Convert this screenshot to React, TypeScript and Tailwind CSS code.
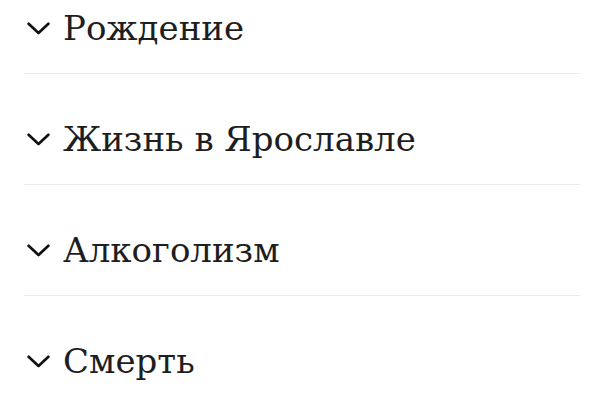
import { useState } from "react";

type Section = {
  id: string;
  title: string;
};

const sections: Section[] = [
  { id: "birth", title: "Рождение" },
  { id: "yaroslavl", title: "Жизнь в Ярославле" },
  { id: "alcohol", title: "Алкоголизм" },
  { id: "death", title: "Смерть" },
];

function Chevron({ open }: { open: boolean }) {
  return (
    <svg
      width={23}
      height={13}
      viewBox="0 0 23 13"
      className={open ? "block rotate-180" : "block"}
      fill="none"
      stroke="#111"
      strokeWidth={2.7}
      strokeLinecap="round"
      strokeLinejoin="round"
    >
      <polyline points="1.6,1.8 11.5,11 21.4,1.8" />
    </svg>
  );
}

export default function App() {
  const [open, setOpen] = useState<string | null>(null);

  return (
    <div className="min-h-screen overflow-hidden bg-white px-6">
      {/* list is scrolled a little past its top */}
      <div className="-mt-[37px]">
        {sections.map((s) => {
          const isOpen = open === s.id;
          return (
            <div key={s.id} className="border-b border-[#ebebeb] last:border-b-0">
              <button
                type="button"
                onClick={() => setOpen(isOpen ? null : s.id)}
                className="flex w-full items-center gap-[13px] pb-[23px] pt-[43px] text-left"
              >
                <span className="flex w-[26px] shrink-0 justify-end">
                  <Chevron open={isOpen} />
                </span>
                <span className="font-['DejaVu_Serif',serif] text-[34px] leading-[44px] text-[#1e1e1e]">
                  {s.title}
                </span>
              </button>
              {isOpen && (
                <div className="pb-6 pl-[39px] font-['DejaVu_Serif',serif] text-lg text-[#444]">
                  …
                </div>
              )}
            </div>
          );
        })}
      </div>
    </div>
  );
}
